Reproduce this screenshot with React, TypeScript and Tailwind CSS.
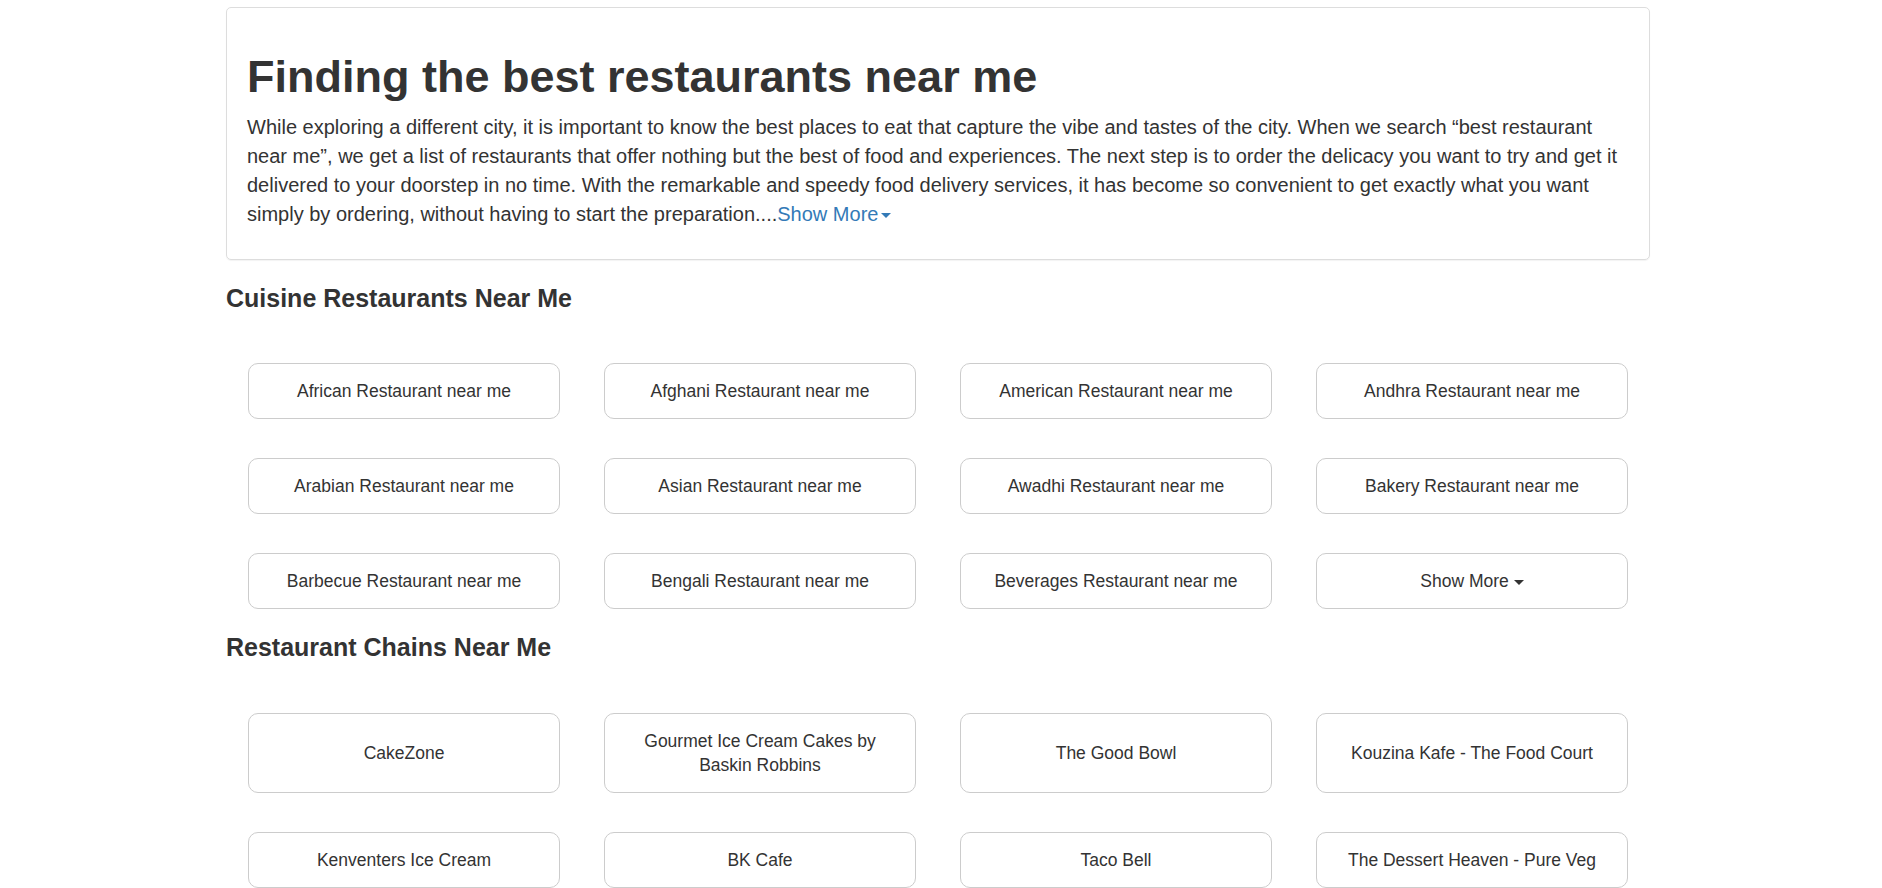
import React from 'react';

const cuisines = [
  'African Restaurant near me',
  'Afghani Restaurant near me',
  'American Restaurant near me',
  'Andhra Restaurant near me',
  'Arabian Restaurant near me',
  'Asian Restaurant near me',
  'Awadhi Restaurant near me',
  'Bakery Restaurant near me',
  'Barbecue Restaurant near me',
  'Bengali Restaurant near me',
  'Beverages Restaurant near me',
];

const chains = [
  'CakeZone',
  'Gourmet Ice Cream Cakes by Baskin Robbins',
  'The Good Bowl',
  'Kouzina Kafe - The Food Court',
  'Kenventers Ice Cream',
  'BK Cafe',
  'Taco Bell',
  'The Dessert Heaven - Pure Veg',
];

const Caret: React.FC<{ tight?: boolean }> = ({ tight }) => (
  <span
    className={
      tight
        ? 'inline-block w-0 h-0 ml-0 align-middle border-t-[5px] border-t-current border-x-[5px] border-x-transparent'
        : 'inline-block w-0 h-0 ml-[3px] align-middle border-t-[5px] border-t-current border-x-[5px] border-x-transparent'
    }
  />
);

const LinkButton: React.FC<{ children: React.ReactNode }> = ({ children }) => (
  <div className="px-[22px]">
    <a
      href="#"
      className="flex items-center justify-center h-full px-5 py-[15px] text-center text-[17.5px] leading-6 text-[#333] bg-white border border-[#ccc] rounded-[10px]"
    >
      <span>{children}</span>
    </a>
  </div>
);

const Section: React.FC<{ title: string; children: React.ReactNode }> = ({ title, children }) => (
  <div className="mt-[25px]">
    <h3 className="text-[25px] leading-[1.1] font-bold text-[#333]">{title}</h3>
    <div className="grid grid-cols-4 gap-y-[39px] mt-[51px]">{children}</div>
  </div>
);

export default function App() {
  return (
    <div className="min-h-screen bg-white font-['Liberation_Sans',Arial,sans-serif] text-[#333]">
      <div className="ml-[226px] w-[1424px] pt-[7px]">
        <div className="border border-[#ddd] rounded-[5px] px-5 pt-[44px] pb-[30px] shadow-[0_1px_1px_rgba(0,0,0,0.05)]">
          <h1 className="text-[45px] leading-[1.1] font-bold text-[#333]">Finding the best restaurants near me</h1>
          <p className="mt-[11px] text-[20px] leading-[29px] text-[#333]">
            While exploring a different city, it is important to know the best places to eat that capture the vibe and
            tastes of the city. When we search “best restaurant near me”, we get a list of restaurants that offer nothing
            but the best of food and experiences. The next step is to order the delicacy you want to try and get it
            delivered to your doorstep in no time. With the remarkable and speedy food delivery services, it has become so
            convenient to get exactly what you want simply by ordering, without having to start the preparation....
            <a href="#" className="text-[#337ab7]">
              Show More
              <Caret />
            </a>
          </p>
        </div>

        <Section title="Cuisine Restaurants Near Me">
          {cuisines.map((c) => (
            <LinkButton key={c}>{c}</LinkButton>
          ))}
          <LinkButton>
            Show More <Caret tight />
          </LinkButton>
        </Section>

        <Section title="Restaurant Chains Near Me">
          {chains.map((c) => (
            <LinkButton key={c}>{c}</LinkButton>
          ))}
        </Section>
      </div>
    </div>
  );
}
